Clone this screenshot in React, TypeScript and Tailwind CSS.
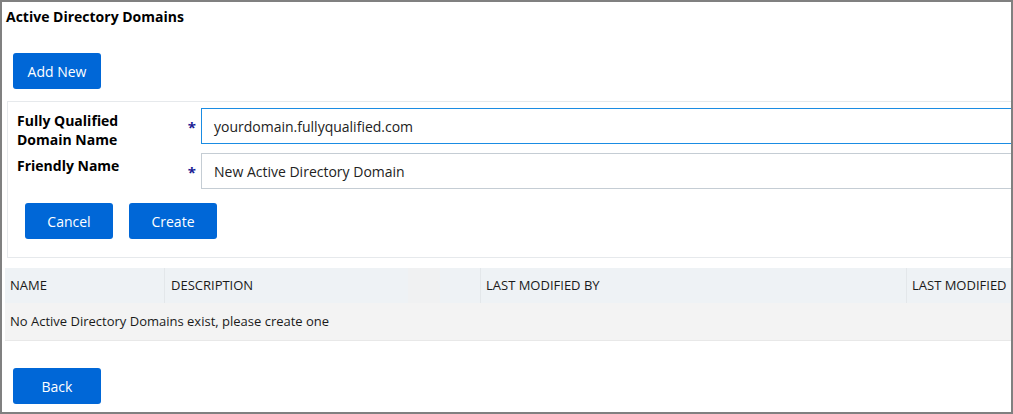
export default function App() {
  const btn =
    "h-[36px] w-[88px] rounded-[3px] bg-[#0067d7] text-[14px] text-white flex items-center justify-center";

  return (
    <div className="w-[1013px] h-[414px] box-border border-2 border-[#808080] bg-white overflow-hidden font-['Open_Sans',sans-serif] text-[#1a1a1a]">
      <h1 className="pt-[5px] pl-[4px] text-[14px] leading-[20px] font-bold text-black">
        Active Directory Domains
      </h1>

      <div className="mt-[26px] ml-[11px]">
        <button className={btn}>Add New</button>
      </div>

      {/* Add form */}
      <div className="mt-[12px] ml-[5px] w-[1040px] border border-[#e6e9ec] pt-[6px] pb-[18px]">
        <div className="flex flex-col gap-[9px]">
          <div className="flex h-[36px] items-start">
            <label className="w-[173px] pl-[9px] pt-[3px] text-[14px] leading-[19px] font-bold text-black">
              Fully Qualified
              <br />
              Domain Name
            </label>
            <span className="w-[20px] h-full flex items-center justify-end pr-[5px] pt-[2px] text-[15px] font-bold text-[#1d1d94]">*</span>
            <div className="flex-1 h-full border border-[#1a8ce3] flex items-center px-[12px] text-[14px] text-[#222]">
              yourdomain.fullyqualified.com
            </div>
          </div>
          <div className="flex h-[36px] items-start">
            <label className="w-[173px] pl-[9px] pt-[3px] text-[14px] leading-[19px] font-bold text-black">
              Friendly Name
            </label>
            <span className="w-[20px] h-full flex items-center justify-end pr-[5px] pt-[2px] text-[15px] font-bold text-[#1d1d94]">*</span>
            <div className="flex-1 h-full border border-[#c5cdd4] flex items-center px-[12px] text-[14px] text-[#222]">
              New Active Directory Domain
            </div>
          </div>
        </div>
        <div className="mt-[14px] ml-[17px] flex gap-[16px]">
          <button className={btn}>Cancel</button>
          <button className={btn}>Create</button>
        </div>
      </div>

      {/* Table */}
      <div className="mt-[10px] ml-[3px] w-[1060px] text-[13px]">
        <div className="flex h-[35px] bg-[#eef2f5] items-center uppercase text-[#1a1a1a]">
          <div className="w-[159px] h-full flex items-center pl-[5px]">Name</div>
          <div className="w-[244px] h-full flex items-center pl-[6px] border-l border-[#e3e7ea]">Description</div>
          <div className="w-[32px] h-full bg-[#f0f1f2]"></div>
          <div className="w-[40px] h-full"></div>
          <div className="w-[426px] h-full flex items-center pl-[5px] border-l border-[#e3e7ea]">Last Modified By</div>
          <div className="flex-1 h-full flex items-center pl-[5px] border-l border-[#e3e7ea]">Last Modified</div>
        </div>
        <div className="h-[38px] bg-[#f3f3f3] border-b border-[#e8e8e8] flex items-center pl-[5px] text-[13px] text-[#1a1a1a]">
          No Active Directory Domains exist, please create one
        </div>
      </div>

      <div className="mt-[27px] ml-[11px]">
        <button className={btn}>Back</button>
      </div>
    </div>
  );
}
